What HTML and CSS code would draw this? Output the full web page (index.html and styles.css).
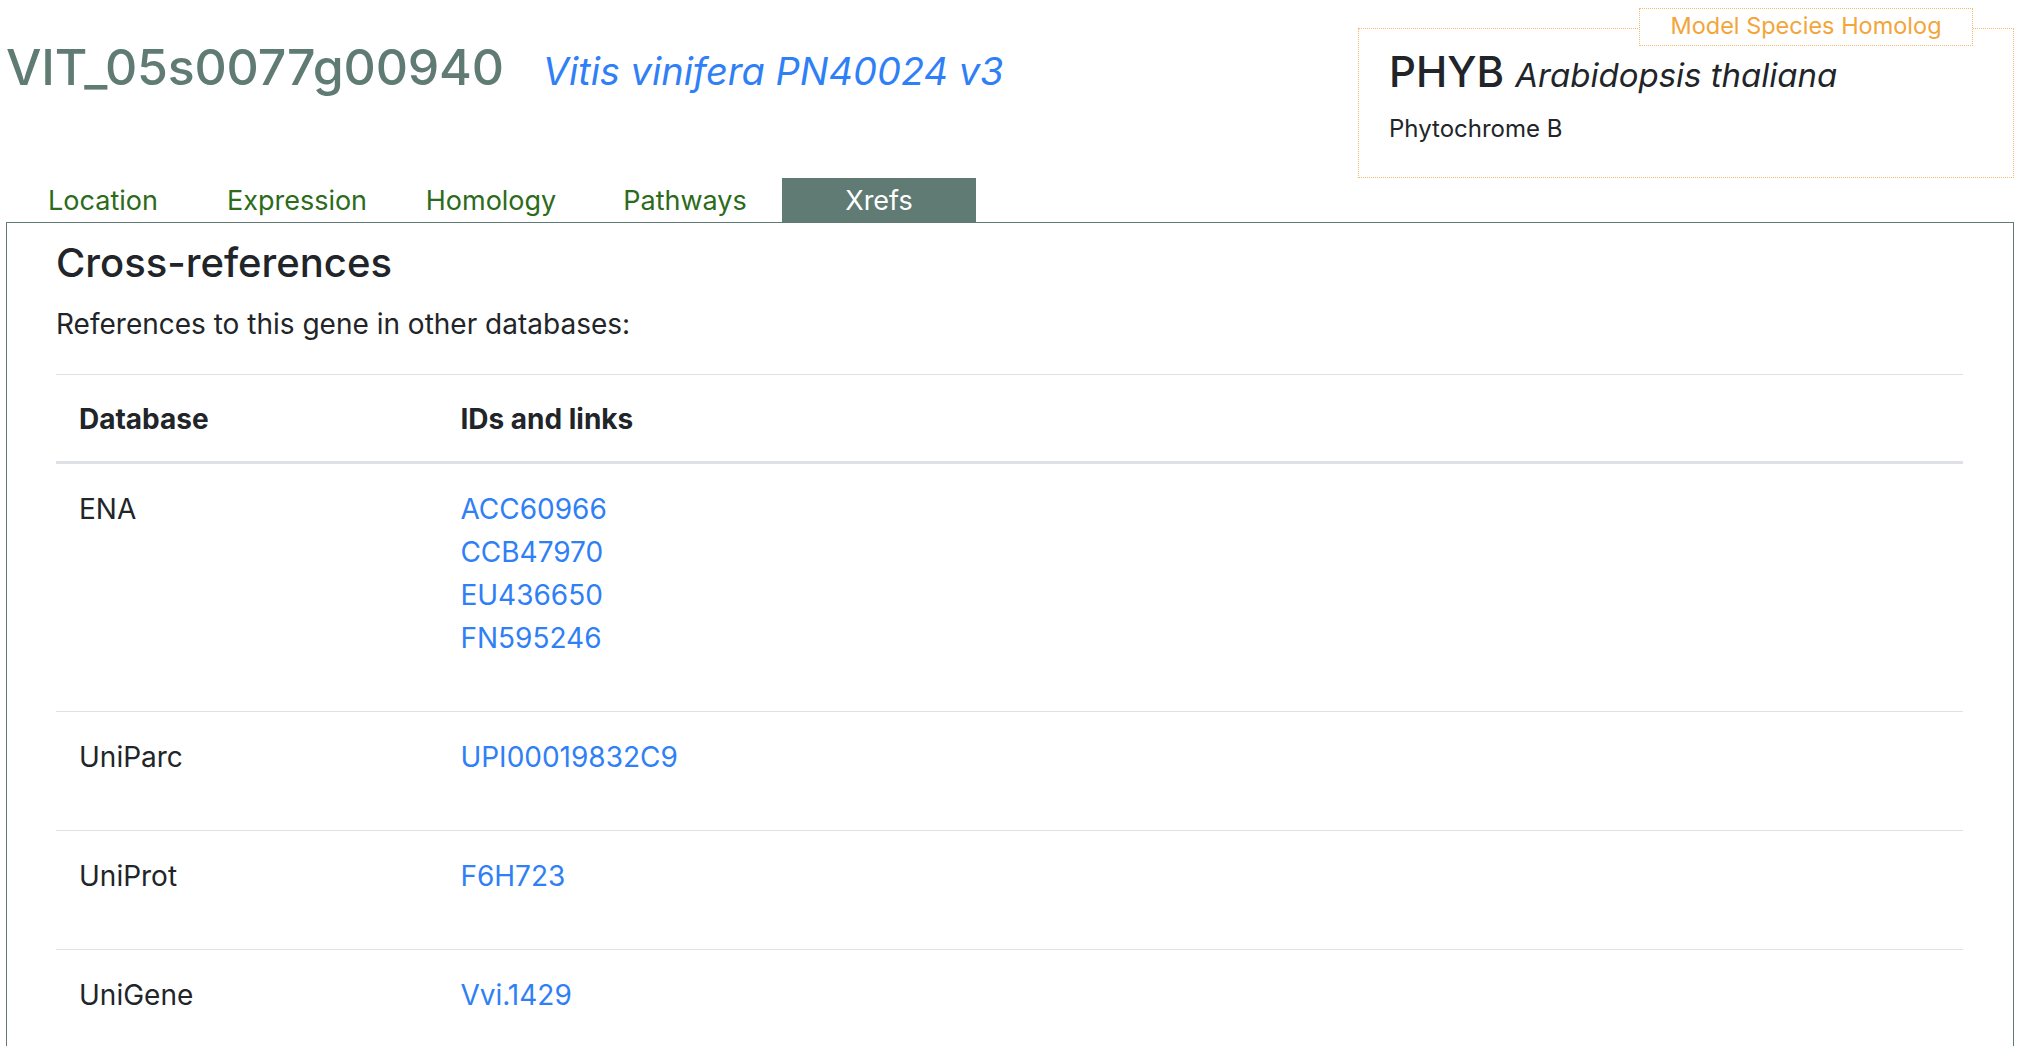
FILE: index.html
```html
<!DOCTYPE html>
<html lang="en">
<head>
<meta charset="utf-8">
<title>VIT_05s0077g00940 - Xrefs</title>
<link rel="stylesheet" href="styles.css">
</head>
<body>
<div class="page">
  <header class="gene-header">
    <h1 class="gene-title">VIT_05s0077g00940<span class="species">Vitis vinifera PN40024 v3</span></h1>
    <aside class="homolog">
      <div class="homolog-label">Model Species Homolog</div>
      <div class="homolog-name"><span class="homolog-symbol">PHYB</span> <em class="homolog-species">Arabidopsis thaliana</em></div>
      <div class="homolog-desc">Phytochrome B</div>
    </aside>
  </header>

  <nav class="tabs">
    <a class="tab">Location</a>
    <a class="tab">Expression</a>
    <a class="tab">Homology</a>
    <a class="tab">Pathways</a>
    <a class="tab tab-active">Xrefs</a>
  </nav>

  <section class="panel">
    <h2 class="panel-title">Cross-references</h2>
    <p class="panel-intro">References to this gene in other databases:</p>
    <table class="xref-table">
      <thead>
        <tr><th class="col-db">Database</th><th>IDs and links</th></tr>
      </thead>
      <tbody>
        <tr>
          <td>ENA</td>
          <td><a class="xref">ACC60966</a><a class="xref">CCB47970</a><a class="xref">EU436650</a><a class="xref">FN595246</a></td>
        </tr>
        <tr><td>UniParc</td><td><a class="xref">UPI00019832C9</a></td></tr>
        <tr><td>UniProt</td><td><a class="xref">F6H723</a></td></tr>
        <tr><td>UniGene</td><td><a class="xref">Vvi.1429</a></td></tr>
      </tbody>
    </table>
  </section>
</div>
</body>
</html>
```

FILE: styles.css
```css
html, body {
  margin: 0;
  padding: 0;
  background: #ffffff;
}

body {
  font-family: "Inter", "Noto Sans", "Liberation Sans", sans-serif;
  color: #212529;
}

.page {
  padding: 0 10px 0 6px;
}

.gene-header {
  display: flex;
  justify-content: space-between;
  align-items: flex-start;
}

.gene-title {
  margin: 37px 0 0 0;
  font-size: 50px;
  line-height: 1.2;
  font-weight: 500;
  color: #5f7b73;
  letter-spacing: -0.2px;
}

.species {
  margin-left: 39px;
  font-size: 38px;
  font-style: italic;
  font-weight: 400;
  color: #2f80f6;
  letter-spacing: 0;
}

.homolog {
  position: relative;
  box-sizing: border-box;
  width: 656px;
  height: 150px;
  margin-top: 28px;
  border: 1px dotted #f3bb6c;
  padding: 18px 30px 0 30px;
}

.homolog-label {
  position: absolute;
  top: -21px;
  left: 280px;
  box-sizing: border-box;
  width: 334px;
  height: 38px;
  border: 1px dotted #f3bb6c;
  background: #ffffff;
  color: #f3a53a;
  font-size: 23.5px;
  line-height: 34px;
  text-align: center;
  font-weight: 400;
}

.homolog-name {
  font-size: 42px;
  line-height: 1.2;
  color: #212529;
  font-weight: 500;
}

.homolog-species {
  font-size: 33px;
  font-weight: 400;
  font-style: italic;
}

.homolog-desc {
  margin-top: 14px;
  font-size: 24px;
  line-height: 1.5;
}

.tabs {
  display: flex;
  margin-top: 0;
}

.tab {
  width: 194px;
  height: 44px;
  box-sizing: border-box;
  text-align: center;
  font-size: 27px;
  line-height: 46px;
  color: #2c6b1b;
  text-decoration: none;
}

.tab-active {
  background: #5f7b73;
  color: #ffffff;
}

.panel {
  border: 1px solid #5f7b73;
  padding: 16px 50px 0 49px;
}

.panel-title {
  margin: 0 0 16px 0;
  font-size: 40px;
  line-height: 1.2;
  font-weight: 500;
  color: #212529;
}

.panel-intro {
  margin: 0 0 29px 0;
  font-size: 28px;
  line-height: 1.5;
}

.xref-table {
  width: 100%;
  border-collapse: collapse;
  font-size: 28px;
}

.xref-table th {
  text-align: left;
  font-weight: 700;
  line-height: 42px;
  padding: 23px 23px 21px 23px;
  border-top: 1px solid #dee2e6;
  border-bottom: 3px solid #dee2e6;
}

.xref-table .col-db {
  width: 20%;
}

.xref-table td {
  vertical-align: top;
  line-height: 43px;
  padding: 24px 23px 51px 23px;
  border-top: 1px solid #dee2e6;
}

.xref {
  display: block;
  color: #2f80f6;
  text-decoration: none;
}
```
